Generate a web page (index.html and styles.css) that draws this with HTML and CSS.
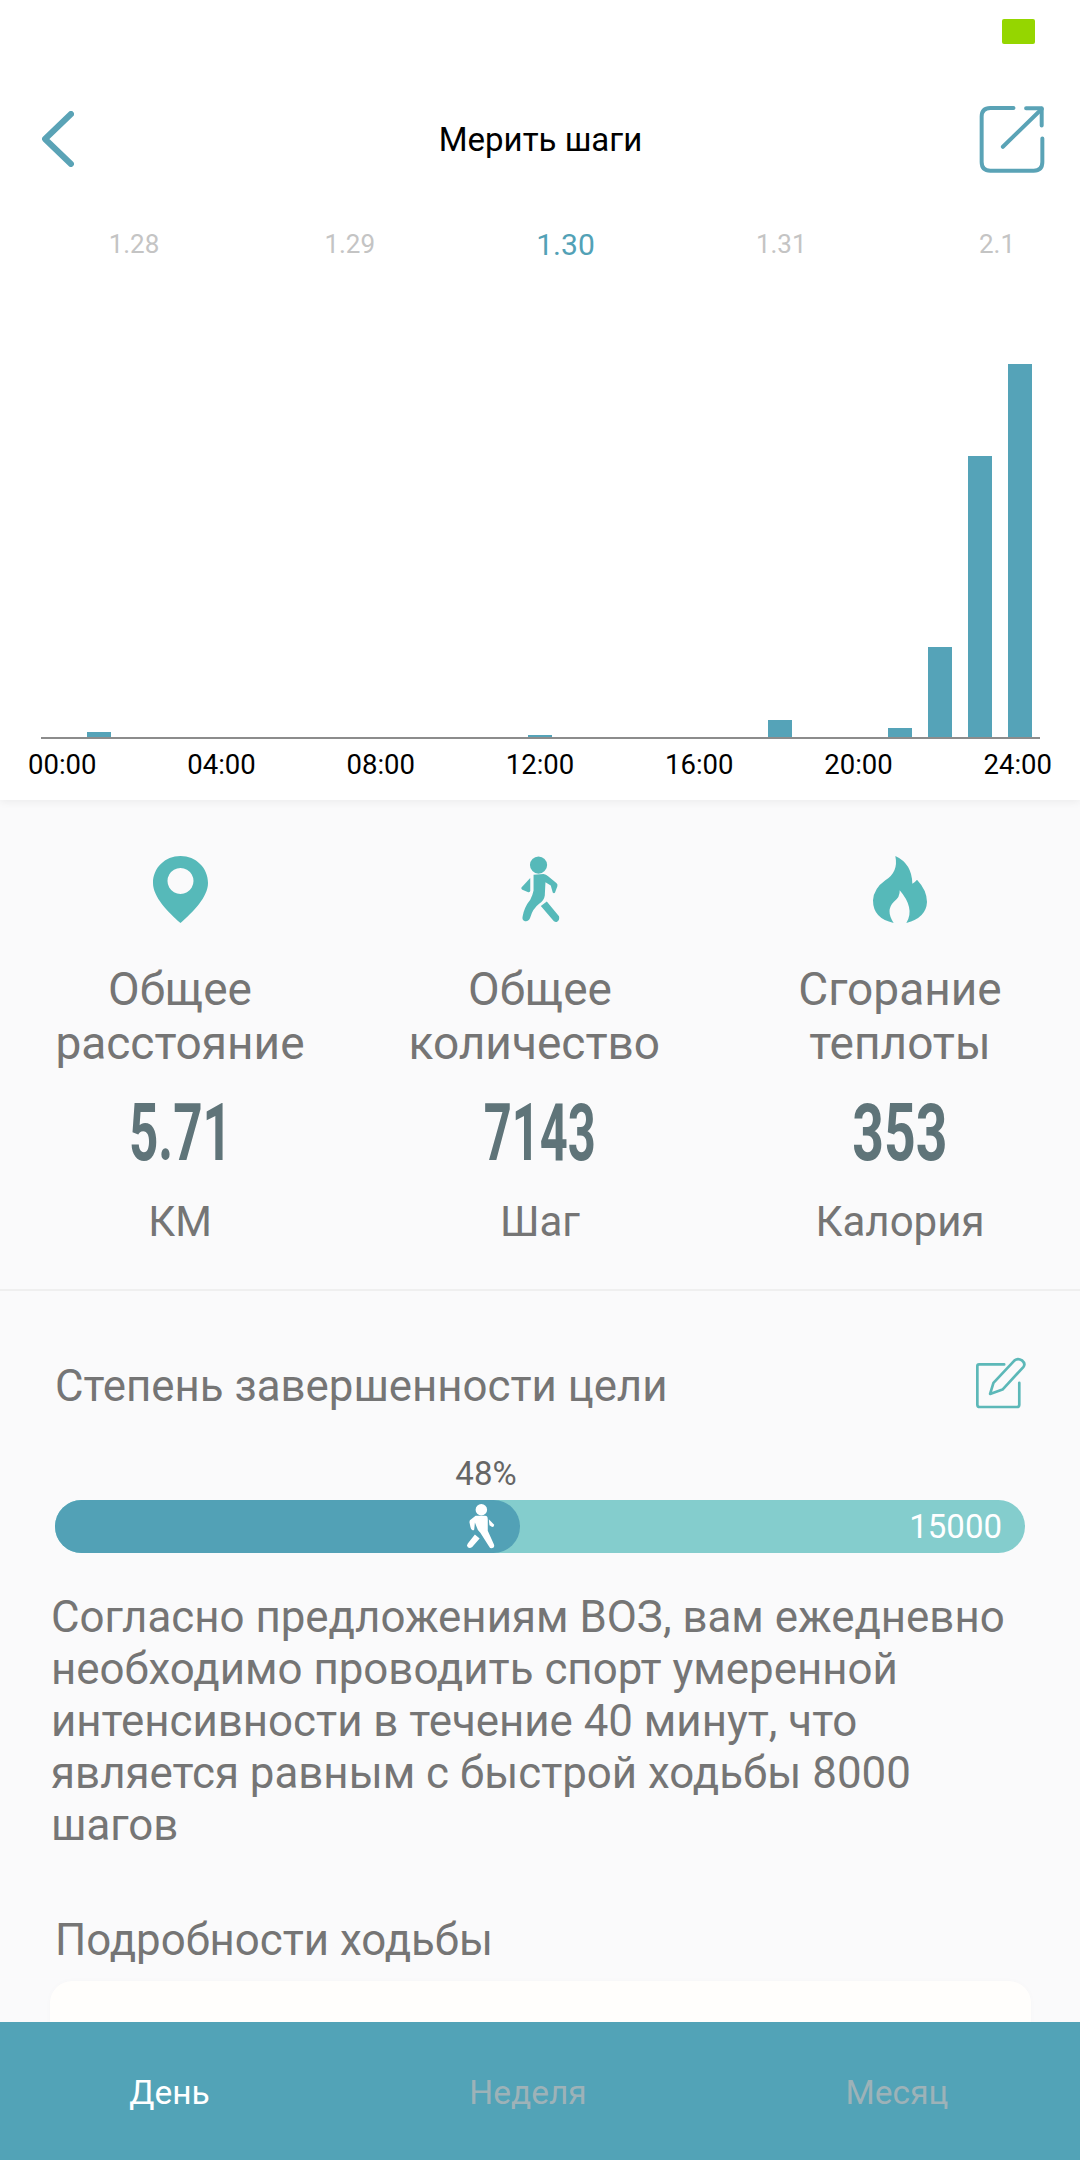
FILE: index.html
```html
<!DOCTYPE html>
<html lang="ru">
<head>
    <meta charset="UTF-8">
    <meta name="viewport" content="width=device-width, initial-scale=1.0">
    <title>Мерить шаги</title>
    <link rel="stylesheet" href="styles.css">
</head>
<body>
    <div class="page">
        <header class="header">
            <div class="status"><span class="battery"></span></div>
            <div class="topbar">
                <svg class="back" viewBox="0 0 32 56"><path d="M29 3 L3 28 L29 53" fill="none" stroke="#5aa3b6" stroke-width="6" stroke-linecap="round" stroke-linejoin="round"/></svg>
                <h1 class="title">Мерить шаги</h1>
                <svg class="share" viewBox="55 45 197 202" fill="none" stroke="#5aa3b6" stroke-width="12" stroke-linecap="round" stroke-linejoin="round">
                    <path d="M158 51 H88 Q62 51 62 77 V214 Q62 240 88 240 H219 Q245 240 245 214 V143"/>
                    <path d="M126 168 L243 54"/>
                    <path d="M196 52 H243 V104"/>
                </svg>
            </div>
            <div class="dates">
                <span class="date">1.28</span>
                <span class="date">1.29</span>
                <span class="date active">1.30</span>
                <span class="date">1.31</span>
                <span class="date">2.1</span>
            </div>
            <div class="chart">
                <div class="col"><i style="height:5px"></i></div>
                <div class="col"></div>
                <div class="col"></div>
                <div class="col"></div>
                <div class="col"></div>
                <div class="col"></div>
                <div class="col"></div>
                <div class="col"></div>
                <div class="col"></div>
                <div class="col"></div>
                <div class="col"></div>
                <div class="col"><i style="height:2px"></i></div>
                <div class="col"></div>
                <div class="col"></div>
                <div class="col"></div>
                <div class="col"></div>
                <div class="col"></div>
                <div class="col"><i style="height:17px"></i></div>
                <div class="col"></div>
                <div class="col"></div>
                <div class="col"><i style="height:9px"></i></div>
                <div class="col"><i style="height:90px"></i></div>
                <div class="col"><i style="height:281px"></i></div>
                <div class="col"><i style="height:373px"></i></div>
            </div>
            <div class="axis">
                <span>00:00</span>
                <span>04:00</span>
                <span>08:00</span>
                <span>12:00</span>
                <span>16:00</span>
                <span>20:00</span>
                <span>24:00</span>
            </div>
        </header>

        <main class="content">
            <section class="stats">
                <div class="stat">
                    <svg class="stat-icon pin" viewBox="0 0 55 67"><path fill-rule="evenodd" d="M27.5 0 C12 0 0 12 0 27 C0 41 15 56 27.5 67 C40 56 55 41 55 27 C55 12 43 0 27.5 0 Z M27.5 12 A13 13 0 1 1 27.49 12 Z"/></svg>
                    <div class="stat-label">Общее<br>расстояние</div>
                    <div class="stat-value"><span>5.71</span></div>
                    <div class="stat-unit">КМ</div>
                </div>
                <div class="stat">
                    <svg class="stat-icon walker" viewBox="90 47 118 200">
                        <circle cx="143" cy="73" r="26"/>
                        <path d="M128 102 L158 100 Q166 101 172 107 L197 127 Q202 131 200 137 L193 156 Q190 161 186 156 L180 135 L164 125 L162 165 Q160 180 145 190 Q125 205 118 232 Q113 245 102 243 Q92 240 95 228 Q100 200 118 178 Q125 165 128 150 Z"/>
                        <path d="M118 112 L118 150 Q118 156 112 155 L94 148 Q89 145 92 140 Z"/>
                        <path d="M150 197 L168 183 L205 228 Q208 240 198 245 Q190 247 185 238 Z"/>
                    </svg>
                    <div class="stat-label">Общее<br>количество&nbsp;</div>
                    <div class="stat-value tight"><span>7143</span></div>
                    <div class="stat-unit">Шаг</div>
                </div>
                <div class="stat">
                    <svg class="stat-icon flame" viewBox="68 47 162 201"><path d="M135 47 Q185 70 186 130 Q195 125 200 118 Q230 150 230 185 Q228 232 168 248 Q182 225 176 200 Q170 175 148 150 Q150 170 130 185 Q105 210 130 248 Q68 235 68 180 Q70 145 105 120 Q145 95 135 47 Z"/></svg>
                    <div class="stat-label">Сгорание<br>теплоты</div>
                    <div class="stat-value wide"><span>353</span></div>
                    <div class="stat-unit">Калория</div>
                </div>
            </section>

            <section class="goal">
                <div class="goal-head">
                    <h2 class="section-title">Степень завершенности цели</h2>
                    <svg class="edit" viewBox="40 45 155 158" fill="none" stroke="#5cb8b8" stroke-width="8" stroke-linejoin="round" stroke-linecap="round">
                        <path d="M127 70 H52 Q47 70 47 75 V190 Q47 197 54 197 H165 Q172 197 172 190 V125"/>
                        <path d="M85 158 L95 125 L158 58 Q168 50 180 58 Q192 68 184 78 L122 145 Z"/>
                    </svg>
                </div>
                <div class="percent">48%</div>
                <div class="progress">
                    <div class="progress-fill" style="width:465px">
                        <svg class="progress-walker" viewBox="82 73 88 133" fill="#fff">
                            <circle cx="127" cy="90" r="17"/>
                            <path d="M110 108 H138 Q146 108 146 118 V152 L164 192 Q168 203 158 204 Q151 204 148 196 L124 158 Q115 150 112 138 L108 128 L106 148 Q104 152 100 150 Q96 148 95 142 L92 128 Q91 121 97 118 Z"/>
                            <path d="M149 118 L165 134 Q165 141 159 141 L151 136 Z"/>
                            <path d="M108 163 L122 175 L100 200 Q93 206 87 201 Q82 196 87 190 Z"/>
                        </svg>
                    </div>
                    <span class="progress-total">15000</span>
                </div>
                <p class="advice">Согласно предложениям ВОЗ, вам ежедневно необходимо проводить спорт умеренной интенсивности в течение 40 минут, что является равным с быстрой ходьбы 8000 шагов</p>
            </section>

            <section class="details">
                <h2 class="section-title">Подробности ходьбы</h2>
                <div class="details-card"></div>
            </section>
        </main>

        <nav class="tabs">
            <span class="tab active">День</span>
            <span class="tab">Неделя</span>
            <span class="tab">Месяц</span>
        </nav>
    </div>
</body>
</html>
```

FILE: styles.css
```css
* {
    box-sizing: border-box;
}
body {
    margin: 0;
    font-family: Roboto, "Liberation Sans", sans-serif;
    background-color: #fafafb;
}
.page {
    width: 1080px;
    height: 2160px;
    display: flex;
    flex-direction: column;
    overflow: hidden;
}

/* header and chart */
.header {
    position: relative;
    height: 800px;
    background-color: #fff;
    box-shadow: 0 2px 8px rgba(0, 0, 0, 0.06);
}
.status {
    height: 64px;
    padding: 19px 45px 0 0;
    display: flex;
    justify-content: flex-end;
}
.battery {
    width: 33px;
    height: 25px;
    background-color: #95d600;
    border-radius: 2px;
}
.topbar {
    height: 150px;
    padding: 0 35px 0 36px;
    display: grid;
    grid-template-columns: 1fr auto 1fr;
    align-items: center;
}
.back {
    width: 32px;
    height: 56px;
    margin-left: 6px;
}
.title {
    margin: 0;
    font-size: 33px;
    font-weight: 400;
    color: #000;
}
.share {
    width: 66px;
    height: 67px;
    justify-self: end;
}
.dates {
    height: 60px;
    padding: 0 18px 0 69px;
    display: flex;
    justify-content: space-between;
    align-items: center;
}
.date {
    width: 130px;
    text-align: center;
    font-size: 26px;
    color: #c4c4c4;
}
.date.active {
    font-size: 30px;
    color: #52a1b6;
}
.chart {
    height: 465px;
    margin: 0 40px 0 41px;
    padding-left: 38px;
    display: flex;
    align-items: flex-end;
    border-bottom: 2px solid #8c8c8c;
}
.col {
    flex: 1;
    padding: 0 8px;
}
.col i {
    display: block;
    background-color: #55a3b8;
}
.axis {
    padding: 11px 28px 0;
    display: flex;
    justify-content: space-between;
    font-size: 27.5px;
    line-height: 30px;
    color: #000;
}

/* totals */
.content {
    flex: 1;
    overflow: hidden;
}
.stats {
    padding: 56px 0 42px;
    display: grid;
    grid-template-columns: repeat(3, 1fr);
    border-bottom: 2px solid #efefef;
}
.stat {
    text-align: center;
}
.stat-icon {
    display: block;
    height: 67px;
    margin: 0 auto;
    fill: #56b9b9;
}
.pin {
    width: 55px;
}
.walker {
    width: 39px;
}
.flame {
    width: 54px;
}
.stat-label {
    margin-top: 39px;
    font-size: 46px;
    line-height: 54px;
    color: #757575;
}
.stat-value {
    margin-top: 23px;
    font-size: 80px;
    line-height: 80px;
    font-weight: 700;
    color: #5f7479;
}
.stat-value span {
    display: inline-block;
    transform: scaleX(0.64);
}
.stat-value.tight span {
    transform: scaleX(0.61);
}
.stat-value.wide span {
    transform: scaleX(0.69);
}
.stat-unit {
    margin-top: 24px;
    font-size: 42px;
    line-height: 50px;
    color: #757575;
}

/* goal */
.goal {
    padding: 65px 0 0;
}
.goal-head {
    height: 60px;
    padding: 0 53px 0 55px;
    display: flex;
    justify-content: space-between;
    align-items: flex-start;
}
.section-title {
    margin: 0;
    font-size: 43.8px;
    line-height: 60px;
    font-weight: 400;
    color: #757575;
}
.edit {
    width: 52px;
    height: 53px;
}
.percent {
    width: 860px;
    margin: 38px 0 0 56px;
    text-align: center;
    font-size: 33px;
    line-height: 40px;
    color: #666;
}
.progress {
    position: relative;
    height: 53px;
    margin: 6px 55px 0;
    padding-right: 23px;
    display: flex;
    justify-content: flex-end;
    align-items: center;
    background-color: #84cdcd;
    border-radius: 27px;
}
.progress-fill {
    position: absolute;
    left: 0;
    top: 0;
    bottom: 0;
    padding-right: 24px;
    display: flex;
    justify-content: flex-end;
    align-items: center;
    background-color: #52a1b6;
    border-radius: 27px;
}
.progress-walker {
    width: 30px;
    height: 45px;
}
.progress-total {
    font-size: 33px;
    color: #fff;
}
.advice {
    margin: 38px 68px 0 51px;
    font-size: 43.85px;
    line-height: 52px;
    color: #757575;
}

/* details */
.details {
    margin-top: 59px;
}
.details .section-title {
    padding-left: 55px;
}
.details-card {
    height: 100px;
    margin: 11px 49px 0 50px;
    background-color: #fffefc;
    border-radius: 22px;
    box-shadow: 0 0 6px rgba(0, 0, 0, 0.02);
}

/* bottom tabs */
.tabs {
    height: 138px;
    display: grid;
    grid-template-columns: 1fr 1fr 1fr;
    background-color: #52a3b7;
    font-size: 33.5px;
    line-height: 142px;
}
.tab {
    text-align: center;
    color: #9db2b8;
}
.tab:nth-child(1) {
    padding-right: 21px;
}
.tab:nth-child(2) {
    padding-right: 24px;
}
.tab:nth-child(3) {
    padding-right: 6px;
}
.tab.active {
    color: #fff;
}
```
